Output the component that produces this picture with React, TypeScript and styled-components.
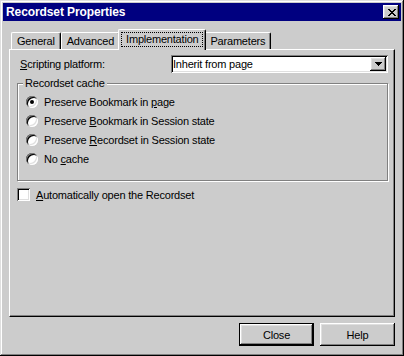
import styled, { createGlobalStyle } from 'styled-components';

const FACE = '#cccccc';
const SHADOW = '#808080';
const HILITE = '#dfdfdf';

const raised = `inset -1px -1px #000, inset 1px 1px #fff, inset -2px -2px ${SHADOW}, inset 2px 2px ${HILITE}`;
const sunken = `inset 1px 1px ${SHADOW}, inset -1px -1px #fff, inset 2px 2px #000, inset -2px -2px ${HILITE}`;

const GlobalStyle = createGlobalStyle`
  html, body {
    margin: 0;
    padding: 0;
    background: ${FACE};
  }
  body {
    font-family: 'Liberation Sans', Arial, sans-serif;
    font-size: 11px;
    letter-spacing: -0.2px;
    color: #000;
  }
`;

const Window = styled.div`
  width: 404px;
  height: 356px;
  box-sizing: border-box;
  padding: 3px;
  background: ${FACE};
  box-shadow: inset -1px -1px #000, inset 1px 1px ${HILITE}, inset -2px -2px ${SHADOW}, inset 2px 2px #fff;
  display: flex;
  flex-direction: column;
`;

const TitleBar = styled.div`
  height: 18px;
  flex: none;
  background: #000080;
  display: flex;
  align-items: center;
  padding: 0 2px 0 3px;
  color: #fff;
  font-weight: bold;
  font-size: 12px;
  letter-spacing: -0.1px;
`;

const TitleText = styled.span`
  flex: 1;
  white-space: nowrap;
`;

const TitleButton = styled.div`
  width: 16px;
  height: 14px;
  background: ${FACE};
  box-shadow: ${raised};
  display: flex;
  align-items: center;
  justify-content: center;
  padding-left: 1px;
  box-sizing: border-box;
`;

const Body = styled.div`
  flex: 1;
  display: flex;
  flex-direction: column;
  padding: 8px 6px 0 6px;
`;

const TabRow = styled.div`
  height: 20px;
  display: flex;
  align-items: flex-end;
  padding-left: 2px;
`;

const Tab = styled.div<{ $active?: boolean }>`
  flex: none;
  position: relative;
  box-sizing: border-box;
  display: flex;
  align-items: center;
  background: ${FACE};
  border-top: 1px solid #fff;
  border-left: 1px solid #fff;
  border-right: 1px solid #000;
  border-radius: 2px 2px 0 0;
  box-shadow: inset -1px 0 ${SHADOW};
  height: ${({ $active }) => ($active ? '21px' : '17px')};
  padding: ${({ $active }) => ($active ? '0 2px 2px 2px' : '0 5px')};
  margin: ${({ $active }) => ($active ? '0 -2px -1px -2px' : '0')};
  z-index: ${({ $active }) => ($active ? 1 : 0)};
`;

const FocusLabel = styled.span`
  border: 1px dotted #000;
  padding: 0 4px;
  line-height: 13px;
`;

const Panel = styled.div`
  height: 268px;
  box-sizing: border-box;
  border-top: 1px solid #fff;
  border-left: 1px solid #fff;
  border-right: 1px solid #000;
  border-bottom: 1px solid #000;
  box-shadow: inset -1px -1px ${SHADOW};
  padding: 5px 6px 0 7px;
  display: flex;
  flex-direction: column;
`;

const FieldRow = styled.div`
  display: flex;
  align-items: center;
  height: 18px;
`;

const FieldLabel = styled.span`
  width: 151px;
  margin-left: 3px;
  flex: none;
`;

const Select = styled.div`
  flex: 1;
  height: 18px;
  box-sizing: border-box;
  background: #fff;
  box-shadow: ${sunken};
  display: flex;
  align-items: center;
  padding: 0 2px 0 2px;
`;

const SelectValue = styled.span`
  flex: 1;
`;

const DropButton = styled.div`
  width: 16px;
  height: 14px;
  background: ${FACE};
  box-shadow: ${raised};
  display: flex;
  align-items: center;
  justify-content: center;
`;

const GroupBox = styled.div`
  position: relative;
  margin-top: 10px;
  border: 1px solid ${SHADOW};
  box-shadow: 1px 1px 0 #fff, inset 1px 1px 0 #fff;
  padding: 8px 8px 12px 8px;
  display: flex;
  flex-direction: column;
`;

const GroupTitle = styled.span`
  position: absolute;
  left: 5px;
  top: -7px;
  padding: 0 2px;
  line-height: 13px;
  background: ${FACE};
`;

const OptionRow = styled.div`
  height: 19px;
  display: flex;
  align-items: center;
  gap: 6px;
`;

const Radio = styled.span<{ $checked?: boolean }>`
  width: 12px;
  height: 12px;
  flex: none;
  border-radius: 50%;
  background: #fff;
  box-shadow: ${sunken};
  display: flex;
  align-items: center;
  justify-content: center;
  &::after {
    content: '';
    width: 4px;
    height: 4px;
    border-radius: 50%;
    background: ${({ $checked }) => ($checked ? '#000' : 'transparent')};
  }
`;

const CheckRow = styled(OptionRow)`
  margin-top: 4px;
`;

const Checkbox = styled.span`
  width: 13px;
  height: 13px;
  flex: none;
  background: #fff;
  box-shadow: ${sunken};
`;

const Key = styled.u`
  text-decoration: underline;
`;

const ButtonRow = styled.div`
  display: flex;
  justify-content: flex-end;
  gap: 6px;
  margin-top: 6px;
`;

const Button = styled.button<{ $default?: boolean }>`
  width: 75px;
  height: 23px;
  box-sizing: border-box;
  background: ${FACE};
  font: inherit;
  letter-spacing: inherit;
  color: #000;
  padding: 0;
  border: ${({ $default }) => ($default ? '1px solid #000' : 'none')};
  box-shadow: ${raised};
`;

const CloseGlyph = () => (
  <svg width="8" height="7" viewBox="0 0 8 7" shapeRendering="crispEdges">
    <path
      d="M0 0h2v1H0zM6 0h2v1H6zM1 1h2v1H1zM5 1h2v1H5zM2 2h4v1H2zM3 3h2v1H3zM2 4h4v1H2zM1 5h2v1H1zM5 5h2v1H5zM0 6h2v1H0zM6 6h2v1H6z"
      fill="#000"
    />
  </svg>
);

const DownArrow = () => (
  <svg width="7" height="4" viewBox="0 0 7 4" shapeRendering="crispEdges">
    <path d="M0 0h7v1H0zM1 1h5v1H1zM2 2h3v1H2zM3 3h1v1H3z" fill="#000" />
  </svg>
);

const options = [
  { pre: 'Preserve Bookmark in ', key: 'p', post: 'age', checked: true },
  { pre: 'Preserve ', key: 'B', post: 'ookmark in Session state' },
  { pre: 'Preserve ', key: 'R', post: 'ecordset in Session state' },
  { pre: 'No ', key: 'c', post: 'ache' },
];

export default function App() {
  return (
    <>
      <GlobalStyle />
      <Window>
        <TitleBar>
          <TitleText>Recordset Properties</TitleText>
          <TitleButton>
            <CloseGlyph />
          </TitleButton>
        </TitleBar>
        <Body>
          <TabRow>
            <Tab>General</Tab>
            <Tab>Advanced</Tab>
            <Tab $active>
              <FocusLabel>Implementation</FocusLabel>
            </Tab>
            <Tab>Parameters</Tab>
          </TabRow>
          <Panel>
            <FieldRow>
              <FieldLabel>
                <Key>S</Key>cripting platform:
              </FieldLabel>
              <Select>
                <SelectValue>Inherit from page</SelectValue>
                <DropButton>
                  <DownArrow />
                </DropButton>
              </Select>
            </FieldRow>
            <GroupBox>
              <GroupTitle>Recordset cache</GroupTitle>
              {options.map((o) => (
                <OptionRow key={o.pre + o.key}>
                  <Radio $checked={o.checked} />
                  <span>
                    {o.pre}
                    <Key>{o.key}</Key>
                    {o.post}
                  </span>
                </OptionRow>
              ))}
            </GroupBox>
            <CheckRow>
              <Checkbox />
              <span>
                <Key>A</Key>utomatically open the Recordset
              </span>
            </CheckRow>
          </Panel>
          <ButtonRow>
            <Button $default>Close</Button>
            <Button>Help</Button>
          </ButtonRow>
        </Body>
      </Window>
    </>
  );
}
